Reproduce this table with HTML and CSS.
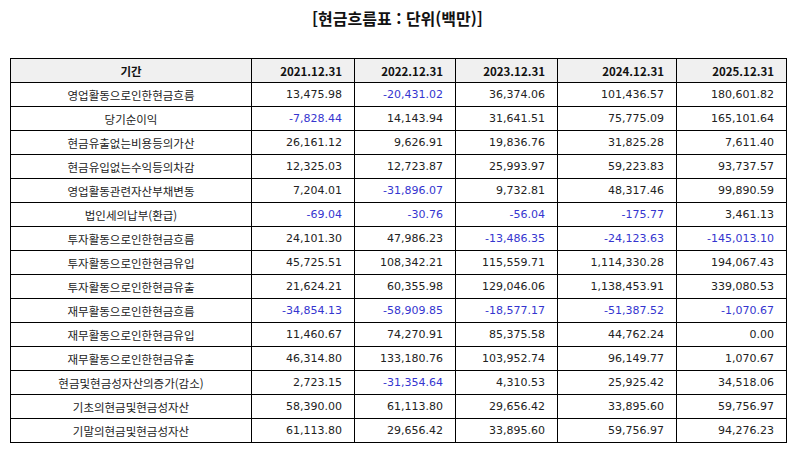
FILE: index.html
```html
<!DOCTYPE html>
<html lang="ko">
<head>
<meta charset="utf-8">
<title>현금흐름표</title>
<link rel="stylesheet" href="styles.css">
</head>
<body>
<div class="page">
  <h1 class="title">[현금흐름표 : 단위(백만)]</h1>
  <table class="cf">
    <colgroup>
      <col class="c-label"><col class="c-y1"><col class="c-y2"><col class="c-y3"><col class="c-y4"><col class="c-y5">
    </colgroup>
    <thead>
      <tr><th class="lbl">기간</th><th>2021.12.31</th><th>2022.12.31</th><th>2023.12.31</th><th>2024.12.31</th><th>2025.12.31</th></tr>
    </thead>
    <tbody>
      <tr><td class="lbl">영업활동으로인한현금흐름</td><td>13,475.98</td><td class="neg">-20,431.02</td><td>36,374.06</td><td>101,436.57</td><td>180,601.82</td></tr>
      <tr><td class="lbl">당기순이익</td><td class="neg">-7,828.44</td><td>14,143.94</td><td>31,641.51</td><td>75,775.09</td><td>165,101.64</td></tr>
      <tr><td class="lbl">현금유출없는비용등의가산</td><td>26,161.12</td><td>9,626.91</td><td>19,836.76</td><td>31,825.28</td><td>7,611.40</td></tr>
      <tr><td class="lbl">현금유입없는수익등의차감</td><td>12,325.03</td><td>12,723.87</td><td>25,993.97</td><td>59,223.83</td><td>93,737.57</td></tr>
      <tr><td class="lbl">영업활동관련자산부채변동</td><td>7,204.01</td><td class="neg">-31,896.07</td><td>9,732.81</td><td>48,317.46</td><td>99,890.59</td></tr>
      <tr><td class="lbl">법인세의납부(환급)</td><td class="neg">-69.04</td><td class="neg">-30.76</td><td class="neg">-56.04</td><td class="neg">-175.77</td><td>3,461.13</td></tr>
      <tr><td class="lbl">투자활동으로인한현금흐름</td><td>24,101.30</td><td>47,986.23</td><td class="neg">-13,486.35</td><td class="neg">-24,123.63</td><td class="neg">-145,013.10</td></tr>
      <tr><td class="lbl">투자활동으로인한현금유입</td><td>45,725.51</td><td>108,342.21</td><td>115,559.71</td><td>1,114,330.28</td><td>194,067.43</td></tr>
      <tr><td class="lbl">투자활동으로인한현금유출</td><td>21,624.21</td><td>60,355.98</td><td>129,046.06</td><td>1,138,453.91</td><td>339,080.53</td></tr>
      <tr><td class="lbl">재무활동으로인한현금흐름</td><td class="neg">-34,854.13</td><td class="neg">-58,909.85</td><td class="neg">-18,577.17</td><td class="neg">-51,387.52</td><td class="neg">-1,070.67</td></tr>
      <tr><td class="lbl">재무활동으로인한현금유입</td><td>11,460.67</td><td>74,270.91</td><td>85,375.58</td><td>44,762.24</td><td>0.00</td></tr>
      <tr><td class="lbl">재무활동으로인한현금유출</td><td>46,314.80</td><td>133,180.76</td><td>103,952.74</td><td>96,149.77</td><td>1,070.67</td></tr>
      <tr><td class="lbl">현금및현금성자산의증가(감소)</td><td>2,723.15</td><td class="neg">-31,354.64</td><td>4,310.53</td><td>25,925.42</td><td>34,518.06</td></tr>
      <tr><td class="lbl">기초의현금및현금성자산</td><td>58,390.00</td><td>61,113.80</td><td>29,656.42</td><td>33,895.60</td><td>59,756.97</td></tr>
      <tr><td class="lbl">기말의현금및현금성자산</td><td>61,113.80</td><td>29,656.42</td><td>33,895.60</td><td>59,756.97</td><td>94,276.23</td></tr>
    </tbody>
  </table>
</div>
</body>
</html>
```
FILE: styles.css
```css
html, body {
  margin: 0;
  padding: 0;
  background: #ffffff;
}

.page {
  padding: 0 10px;
  font-family: "DejaVu Sans", "Noto Sans CJK KR", sans-serif;
  color: #222222;
}

.title {
  margin: 0;
  padding-top: 6px;
  height: 58px;
  box-sizing: border-box;
  text-align: center;
  font-family: "Noto Sans CJK KR", sans-serif;
  font-size: 16px;
  font-weight: 700;
  line-height: 24px;
  color: #111111;
}

.cf {
  border-collapse: collapse;
  table-layout: fixed;
  width: 776px;
}

.c-label { width: 241px; }
.c-y1 { width: 103px; }
.c-y2 { width: 101px; }
.c-y3 { width: 102px; }
.c-y4 { width: 119px; }
.c-y5 { width: 110px; }

.cf th,
.cf td {
  border: 1px solid #000000;
  height: 23px;
  padding: 0 12px 0 4px;
  text-align: right;
  font-size: 11px;
  line-height: 14px;
  white-space: nowrap;
}

.cf th {
  background: #f0f0f0;
  font-family: "Noto Sans CJK KR", sans-serif;
  font-weight: 700;
  font-size: 11.5px;
  color: #111111;
}

.cf .lbl {
  text-align: center;
  padding: 0 4px;
  font-family: "Noto Sans CJK KR", sans-serif;
  font-size: 11.5px;
}

.cf .neg {
  color: #3535cf;
}
```
